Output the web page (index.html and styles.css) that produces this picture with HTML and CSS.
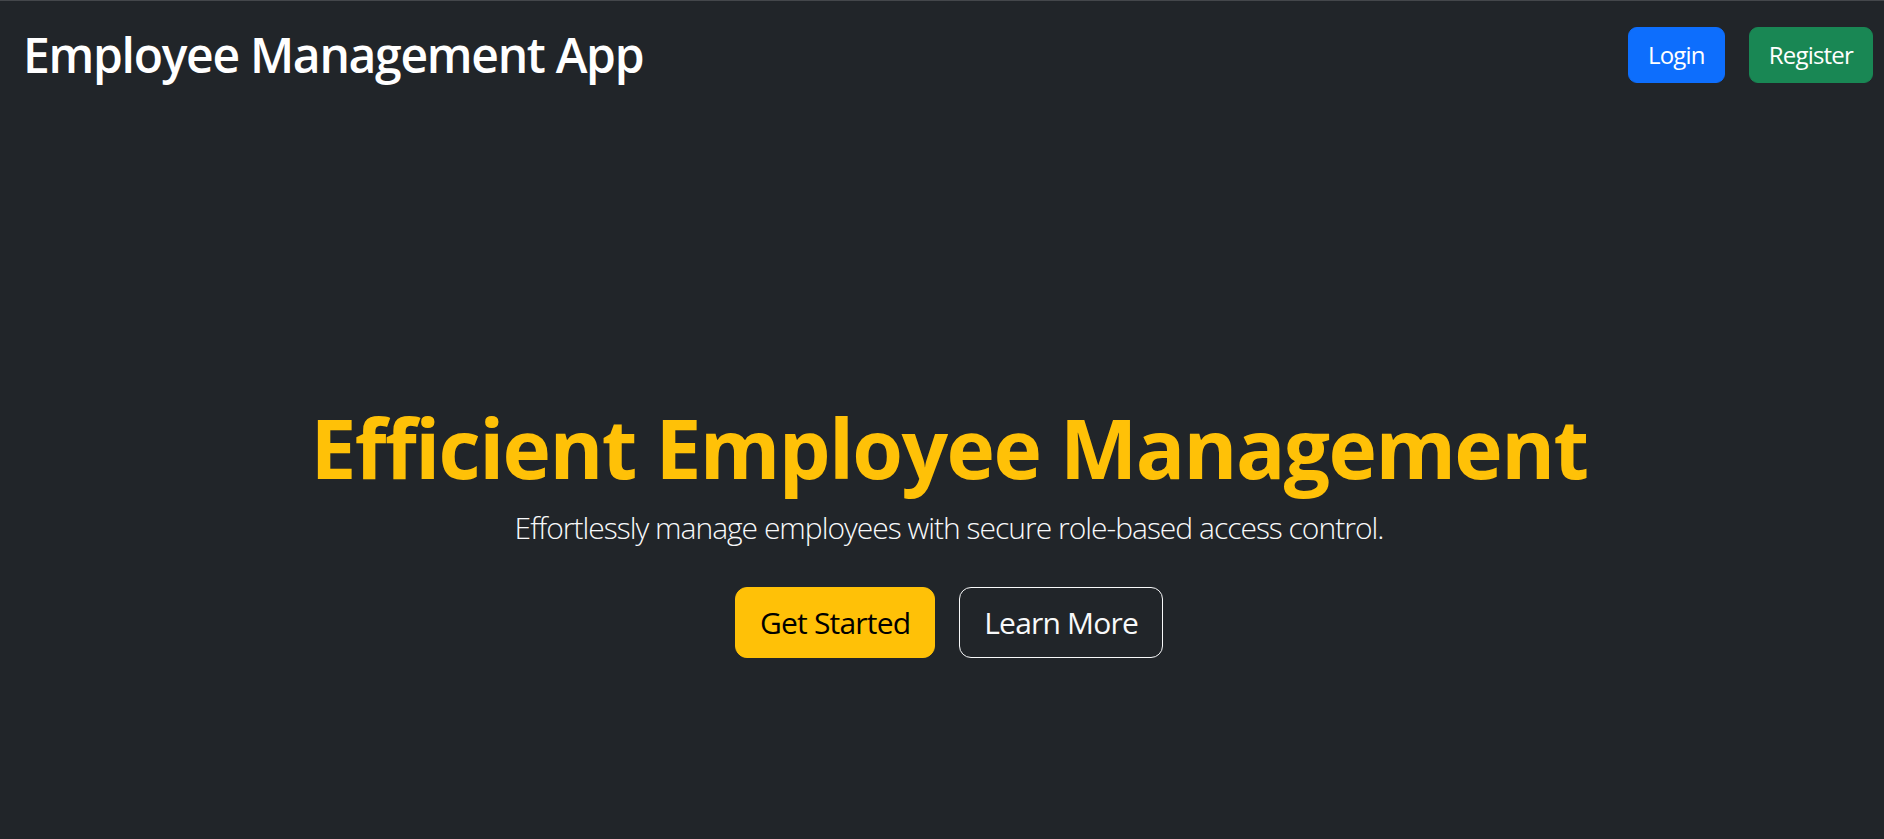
FILE: index.html
```html
<!DOCTYPE html>
<html lang="en">
<head>
<meta charset="utf-8">
<title>Employee Management App</title>
<link rel="stylesheet" href="styles.css">
</head>
<body>
<nav class="navbar">
  <h1 class="brand">Employee Management App</h1>
  <div class="nav-actions">
    <a class="btn btn-primary" href="#">Login</a>
    <a class="btn btn-success" href="#">Register</a>
  </div>
</nav>
<main class="hero">
  <h2 class="hero-title">Efficient Employee Management</h2>
  <p class="lead">Effortlessly manage employees with secure role-based access control.</p>
  <div class="hero-actions">
    <a class="btn btn-lg btn-warning" href="#">Get Started</a>
    <a class="btn btn-lg btn-outline-light" href="#">Learn More</a>
  </div>
</main>
</body>
</html>
```

FILE: styles.css
```css
* { box-sizing: border-box; }
html, body {
  margin: 0;
  padding: 0;
  background: #212529;
  overflow: hidden;
}
body {
  font-family: "Open Sans", "Noto Sans", sans-serif;
  color: #fff;
  border-top: 1px solid #44474b;
}
.navbar {
  height: 107px;
  display: flex;
  align-items: center;
  justify-content: space-between;
  padding: 0 11px 0 23px;
}
.brand {
  margin: 0;
  font-size: 48px;
  line-height: 48px;
  font-weight: 600;
  letter-spacing: -1.3px;
  color: #fff;
}
.nav-actions {
  display: flex;
  gap: 24px;
}
.btn {
  display: inline-flex;
  align-items: center;
  justify-content: center;
  height: 56px;
  padding: 0 19px;
  font-size: 24px;
  font-weight: 400;
  letter-spacing: -0.8px;
  border: 1px solid transparent;
  border-radius: 9px;
  text-decoration: none;
  color: #fff;
}
.btn-primary { background: #0d6efd; border-color: #0d6efd; }
.btn-success { background: #198754; border-color: #198754; }
.hero {
  height: 839px;
  display: flex;
  flex-direction: column;
  align-items: center;
  justify-content: center;
  padding-left: 14px;
}
.hero-title {
  margin: 0 0 8px;
  font-size: 82px;
  line-height: 100px;
  font-weight: 700;
  letter-spacing: -1.6px;
  color: #ffc107;
}
.lead {
  margin: 0 0 37px;
  font-size: 30px;
  line-height: 45px;
  font-weight: 300;
  letter-spacing: -1px;
  color: #f8f9fa;
}
.hero-actions {
  display: flex;
  gap: 24px;
}
.btn-lg {
  height: 71px;
  padding: 0 24px;
  font-size: 30px;
  border-radius: 12px;
}
.btn-warning { background: #ffc107; border-color: #ffc107; color: #000; }
.btn-outline-light { background: transparent; border-color: #f8f9fa; color: #f8f9fa; }
```
